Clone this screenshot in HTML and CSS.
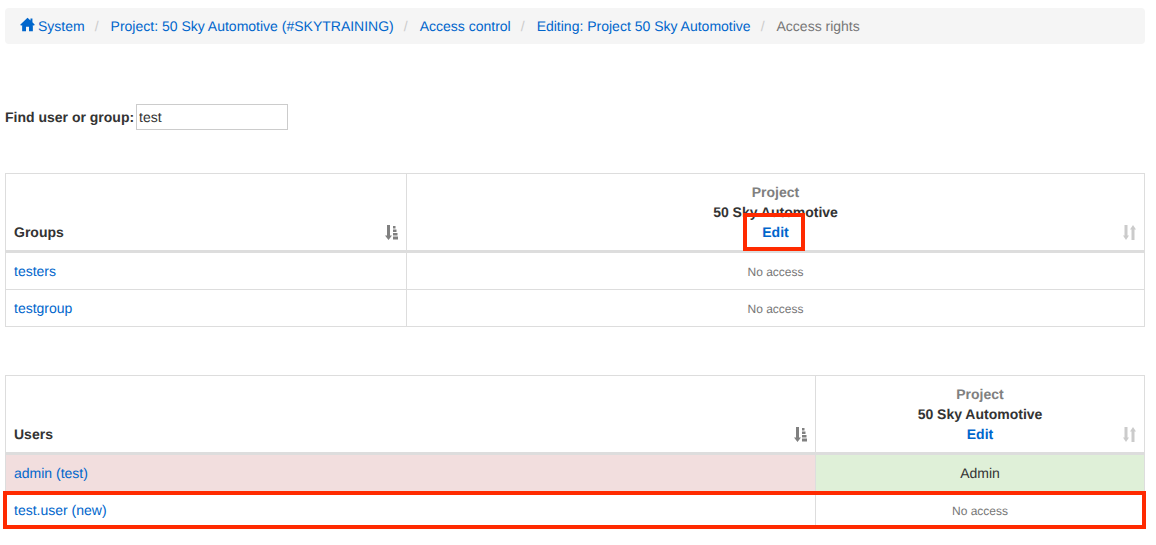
FILE: index.html
```html
<!DOCTYPE html>
<html lang="en">
<head>
<meta charset="utf-8">
<title>Access rights</title>
<link rel="stylesheet" href="styles.css">
</head>
<body>
<main class="page">
  <ol class="breadcrumb">
    <li><a href="#"><svg class="home" viewBox="0 0 14 14" width="15" height="15"><path d="M7 .6 .2 7.2l.9 .9L2 7.4V13.4h3.600V9.200h2.800v4.200H12V7.400l.9 .7 .9-.9L11.600 5V1.400H9.800v1.900Z"/></svg>System</a></li>
    <li><a href="#">Project: 50 Sky Automotive (#SKYTRAINING)</a></li>
    <li><a href="#">Access control</a></li>
    <li><a href="#">Editing: Project 50 Sky Automotive</a></li>
    <li class="active">Access rights</li>
  </ol>

  <form class="finder">
    <label for="find">Find user or group:</label>
    <input id="find" type="text" value="test">
  </form>

  <table class="grid grid-groups">
    <thead>
      <tr>
        <th class="name-col">Groups
          <svg class="sort" viewBox="0 0 13 15" width="13" height="15"><path d="M2 0h3v10.500h2L3.500 15 0 10.500h2Z"/><path d="M8 1h2.500v2.500H8ZM8 4.500h3.500v2.500H8ZM8 8h4.500v2.500H8ZM8 11.500h5v3H8Z"/></svg>
        </th>
        <th class="project-col">
          <div class="kind">Project</div>
          <div>50 Sky Automotive</div>
          <a href="#">Edit</a>
          <svg class="sort sort-idle" viewBox="0 0 13 15" width="13" height="15"><path d="M1.500 0h3v10.500h1.500L3 15 0 10.500h1.500ZM8.500 15V4.500H7L10 0l3 4.500h-1.500V15Z"/></svg>
        </th>
      </tr>
    </thead>
    <tbody>
      <tr><td><a href="#">testers</a></td><td class="access">No access</td></tr>
      <tr><td><a href="#">testgroup</a></td><td class="access">No access</td></tr>
    </tbody>
  </table>

  <table class="grid grid-users">
    <thead>
      <tr>
        <th class="name-col">Users
          <svg class="sort" viewBox="0 0 13 15" width="13" height="15"><path d="M2 0h3v10.500h2L3.500 15 0 10.500h2Z"/><path d="M8 1h2.500v2.500H8ZM8 4.500h3.500v2.500H8ZM8 8h4.500v2.500H8ZM8 11.500h5v3H8Z"/></svg>
        </th>
        <th class="project-col">
          <div class="kind">Project</div>
          <div>50 Sky Automotive</div>
          <a href="#">Edit</a>
          <svg class="sort sort-idle" viewBox="0 0 13 15" width="13" height="15"><path d="M1.500 0h3v10.500h1.500L3 15 0 10.500h1.500ZM8.500 15V4.500H7L10 0l3 4.500h-1.500V15Z"/></svg>
        </th>
      </tr>
    </thead>
    <tbody>
      <tr><td class="danger"><a href="#">admin (test)</a></td><td class="role success">Admin</td></tr>
      <tr><td><a href="#">test.user (new)</a></td><td class="access">No access</td></tr>
    </tbody>
  </table>

  <div class="mark mark-edit"></div>
  <div class="mark mark-row"></div>
</main>
</body>
</html>
```
FILE: styles.css
```css
* { box-sizing: border-box; }
html, body { margin: 0; padding: 0; background: #fff; }
body {
  font-family: "Liberation Sans", Arial, sans-serif;
  font-size: 14px;
  line-height: 20px;
  color: #333;
  text-rendering: geometricPrecision;
}
a { color: #0066cc; text-decoration: none; }
.page { position: relative; padding: 8px 11px 0 5px; }

.breadcrumb {
  display: flex;
  list-style: none;
  margin: 0;
  padding: 8px 15px;
  height: 36px;
  background: #f5f5f5;
  border-radius: 4px;
}
.breadcrumb li + li::before {
  content: "/";
  padding: 0 12px 0 10px;
  color: #ccc;
}
.breadcrumb .active { color: #777; }
.home { fill: #0066cc; vertical-align: -1px; margin-right: 3px; }

.finder { display: flex; align-items: center; margin: 60px 0 43px; height: 26px; }
.finder label { font-weight: 700; width: 131px; }
.finder input {
  width: 152px;
  height: 26px;
  padding: 1px 2px;
  border: 1px solid #ccc;
  font: 14px/20px "Liberation Sans", Arial, sans-serif;
  color: #333;
  background: #fff;
  text-rendering: geometricPrecision;
}

.grid {
  width: 100%;
  table-layout: fixed;
  border-collapse: collapse;
  border: 1px solid #ddd;
}
.grid-groups { margin-bottom: 48px; }
.grid th, .grid td {
  border: 1px solid #ddd;
  padding: 8px;
  line-height: 20px;
  vertical-align: middle;
}
.grid th {
  position: relative;
  border-bottom: 3px solid #ddd;
  vertical-align: bottom;
  font-weight: 700;
}
.name-col { text-align: left; }
.project-col { text-align: center; }
.grid-groups .name-col { width: 401px; }
.grid-users .name-col { width: 810px; }
.kind { color: #808080; }
.access, .role { text-align: center; }
.grid .access { font-size: 12px; color: #777; padding-top: 9px; padding-bottom: 7px; }
.danger { background: #f2dede; }
.success { background: #dff0d8; }

.sort { position: absolute; right: 8px; bottom: 10px; fill: #808080; }
.sort-idle { opacity: .4; }

.mark { position: absolute; border: 4px solid #ff2a00; pointer-events: none; }
.mark-edit { left: 743px; top: 213px; width: 62px; height: 38px; }
.mark-row { left: 3px; top: 491px; width: 1143px; height: 38px; }
```
